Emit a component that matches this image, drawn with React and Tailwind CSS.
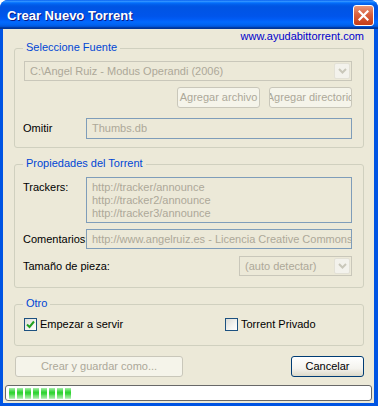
import React from 'react';

const Chevron = () => (
  <svg width="9" height="6" viewBox="0 0 9 6">
    <path d="M1 1l3.5 3.5L8 1" fill="none" stroke="#c9c7ba" strokeWidth="2" />
  </svg>
);

function Combo({ text, className = '' }) {
  return (
    <div className={`flex h-[20px] items-center border border-[#c9c7ba] bg-[#ece9d8] ${className}`}>
      <span className="flex-1 overflow-hidden whitespace-nowrap pl-[5px] leading-[18px] text-[#aca899]">{text}</span>
      <div className="mr-[1px] flex h-[16px] w-[16px] items-center justify-center rounded-[2px] border border-[#e3e1d6] bg-[#f3f2ec]">
        <Chevron />
      </div>
    </div>
  );
}

function Group({ title, className = '', children }) {
  return (
    <div className={`relative rounded-[3px] border border-[#d0d0bf] ${className}`}>
      <span className="absolute -top-[8px] left-[8px] bg-[#ece9d8] px-[3px] leading-[13px] text-[#0046d5]">
        {title}
      </span>
      {children}
    </div>
  );
}

function DisabledButton({ label, className = '' }) {
  return (
    <div className={`flex h-[21px] items-center justify-center overflow-hidden whitespace-nowrap rounded-[3px] border border-[#c9c7ba] bg-[#f5f4ea] text-[#aca899] ${className}`}>
      {label}
    </div>
  );
}

function Field({ children, className = '' }) {
  return (
    <div className={`overflow-hidden whitespace-nowrap border border-[#7f9db9] bg-[#ece9d8] pl-[5px] text-[#aca899] ${className}`}>
      {children}
    </div>
  );
}

function Checkbox({ checked }) {
  return (
    <div className="flex h-[13px] w-[13px] items-center justify-center border border-[#1c5180] bg-[linear-gradient(135deg,#dcdcd7_0%,#f4f4f0_60%,#ffffff_100%)]">
      {checked && (
        <svg width="9" height="9" viewBox="0 0 9 9">
          <path d="M1 4.5l2.5 2.5L8 1.5" fill="none" stroke="#21a121" strokeWidth="2" />
        </svg>
      )}
    </div>
  );
}

export default function App() {
  const blocks = [0, 1, 2, 3, 4, 5, 6, 7];
  return (
    <div className="h-[406px] w-[378px] bg-white font-['Liberation_Sans',Arial,sans-serif] text-[11px] text-black">
      <div className="flex h-full flex-col rounded-t-[8px] bg-[#0054e3]">
        {/* title bar */}
        <div className="flex h-[29px] shrink-0 items-center justify-between rounded-t-[8px] bg-[linear-gradient(to_bottom,#0058ee_0%,#3593ff_4%,#288eff_6%,#127dff_8%,#036ffc_10%,#0262ee_14%,#0057e5_20%,#0054e3_24%,#0055eb_56%,#005bf5_66%,#026afe_76%,#0062ef_86%,#0052d6_92%,#0040ab_94%,#003092_100%)] pl-[7px] pr-[4px] pt-[2px]">
          <span className="text-[13px] font-bold text-white [text-shadow:1px_1px_0_#0a1883]">Crear Nuevo Torrent</span>
          <div className="flex h-[21px] w-[21px] items-center justify-center rounded-[3px] border border-white bg-[linear-gradient(180deg,#e8977a_0%,#d9603e_45%,#c63d18_100%)]">
            <svg width="11" height="11" viewBox="0 0 11 11">
              <path d="M1.5 1.5l8 8M9.5 1.5l-8 8" stroke="#fff" strokeWidth="2.2" strokeLinecap="square" />
            </svg>
          </div>
        </div>

        {/* body */}
        <div className="mb-[3px] ml-[3px] mr-[4px] flex flex-1 flex-col bg-[#ece9d8]">
          <div className="mt-[1px] h-[13px] pr-[10px] text-right leading-[13px] text-[#0000cc]">www.ayudabittorrent.com</div>

          <div className="flex flex-col pl-[11px] pr-[10px]">
            <Group title="Seleccione Fuente" className="mt-[5px] h-[100px] pl-[9px] pr-[11px] pt-[12px]">
              <Combo text="C:\Angel Ruiz - Modus Operandi (2006)" />
              <div className="mt-[6px] flex justify-end gap-[9px]">
                <DisabledButton label="Agregar archivo" className="w-[83px]" />
                <DisabledButton label="Agregar directorio" className="w-[83px]" />
              </div>
              <div className="mt-[10px] flex items-center">
                <span className="-ml-[1px] w-[63px]">Omitir</span>
                <Field className="h-[21px] flex-1 leading-[19px]">Thumbs.db</Field>
              </div>
            </Group>

            <Group title="Propiedades del Torrent" className="mt-[16px] h-[124px] pl-[9px] pr-[11px] pt-[12px]">
              <div className="flex">
                <span className="-ml-[1px] mt-[4px] w-[63px] leading-[13px]">Trackers:</span>
                <Field className="h-[46px] flex-1 pt-[3px] leading-[13px]">
                  <div>http://tracker/announce</div>
                  <div>http://tracker2/announce</div>
                  <div>http://tracker3/announce</div>
                </Field>
              </div>
              <div className="mt-[6px] flex items-center">
                <span className="-ml-[1px] w-[63px] whitespace-nowrap">Comentarios:</span>
                <Field className="h-[20px] flex-1 leading-[18px]">http://www.angelruiz.es - Licencia Creative Commons</Field>
              </div>
              <div className="mt-[7px] flex items-center">
                <span className="-ml-[1px] flex-1">Tamaño de pieza:</span>
                <Combo text="(auto detectar)" className="w-[113px]" />
              </div>
            </Group>

            <Group title="Otro" className="mt-[16px] h-[42px] pl-[9px] pt-[13px]">
              <div className="flex items-center">
                <div className="flex w-[201px] items-center gap-[3px]">
                  <Checkbox checked />
                  <span className="leading-[13px]">Empezar a servir</span>
                </div>
                <div className="flex items-center gap-[3px]">
                  <Checkbox />
                  <span className="leading-[13px]">Torrent Privado</span>
                </div>
              </div>
            </Group>

            <div className="mt-[10px] flex justify-between">
              <DisabledButton label="Crear y guardar como..." className="ml-[1px] w-[168px]" />
              <div className="flex h-[21px] w-[73px] items-center justify-center rounded-[3px] border border-[#003c74] bg-[linear-gradient(180deg,#ffffff_0%,#f4f3ee_60%,#dcd9c9_100%)]">
                Cancelar
              </div>
            </div>
          </div>

          <div className="mx-[2px] mt-[8px] flex h-[16px] gap-[2px] rounded-[3px] border border-[#686868] bg-white pl-[3px] pt-[2px]">
            {blocks.map(b => (
              <div
                key={b}
                className="h-[11px] w-[6px] bg-[linear-gradient(to_bottom,#acedad_0%,#7be47d_14%,#4cda50_28%,#2ed330_42%,#42d845_57%,#76e275_71%,#8fe791_85%,#c8f5c8_100%)]"
              />
            ))}
          </div>
        </div>
      </div>
    </div>
  );
}
